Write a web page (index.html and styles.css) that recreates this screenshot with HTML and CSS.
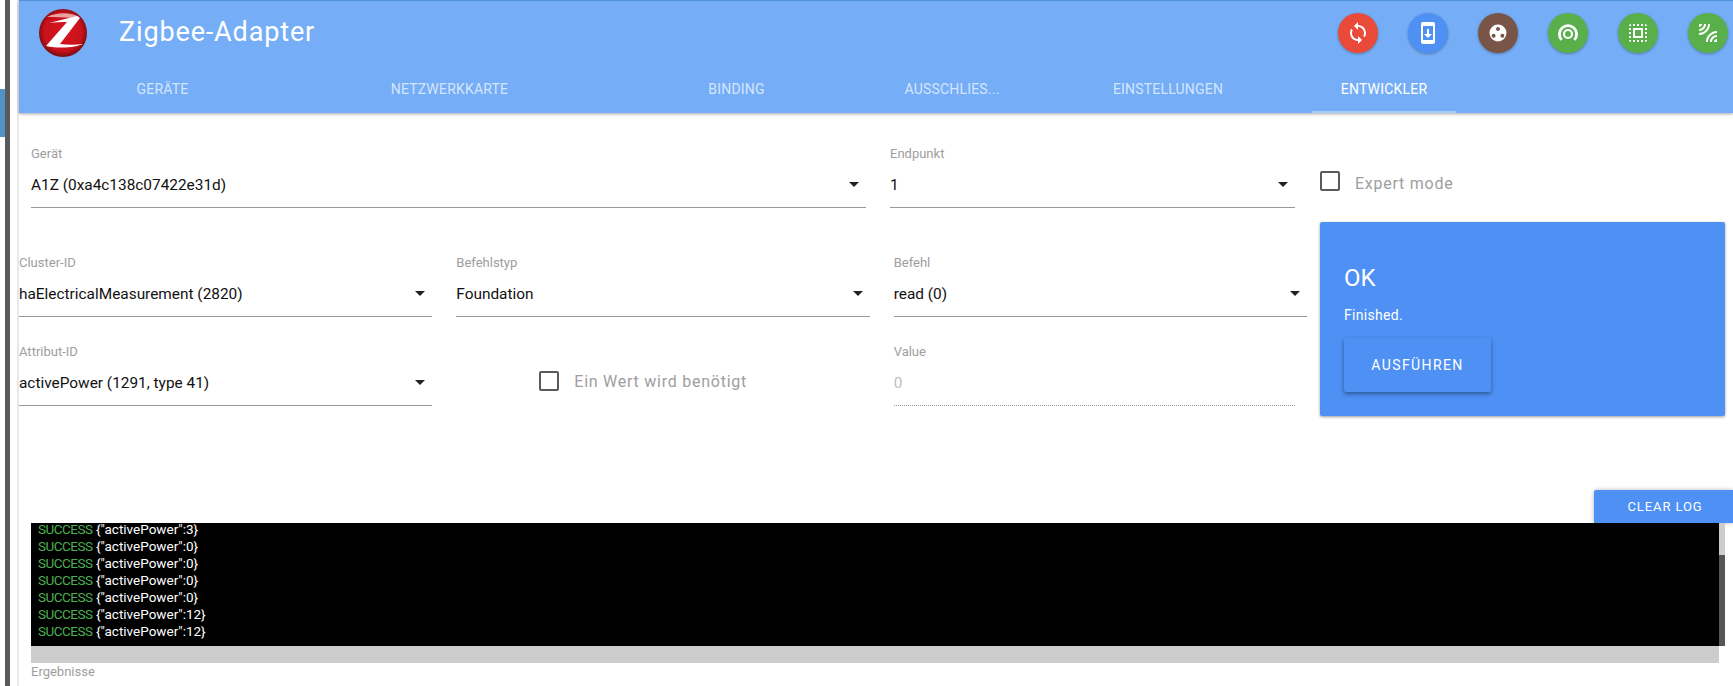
FILE: index.html
```html
<!DOCTYPE html>
<html lang="de">
<head>
<meta charset="utf-8">
<title>Zigbee-Adapter</title>
<link rel="stylesheet" href="styles.css">
</head>
<body>
<div class="page">
  <div class="rail">
    <div class="rail-edge"><div class="rail-stripe"></div></div>
    <div class="rail-bar"></div>
  </div>
  <main class="main">
    <header class="appbar">
      <div class="toolbar">
        <svg class="logo" viewBox="0 0 48 48" width="48" height="48" aria-hidden="true">
          <defs>
            <radialGradient id="sphere" cx="50%" cy="48%" r="55%">
              <stop offset="0" stop-color="#d8141f"/>
              <stop offset="0.72" stop-color="#c8121c"/>
              <stop offset="0.93" stop-color="#7d0d10"/>
              <stop offset="1" stop-color="#3b0a08"/>
            </radialGradient>
          </defs>
          <circle cx="24" cy="24" r="24" fill="url(#sphere)"/>
          <path d="M8 8 C18 3 32 3 40 8 L33 9 C24 8 16 8 8 8Z" fill="#e9a0a0"/>
          <path d="M10 14 L38 7 L41 9 L21 35 C29 36 37 36 44 35 C38 38 22 40 7 37 L28 13 C22 13 16 13 10 14Z" fill="#fff"/>
        </svg>
        <h1 class="title">Zigbee-Adapter</h1>
        <div class="actions">
          <span class="fab fab-red"><svg viewBox="0 0 24 24" width="24" height="24"><path d="M12 4V1L8 5l4 4V6c3.31 0 6 2.69 6 6 0 1.01-.25 1.97-.7 2.8l1.46 1.46C19.54 15.03 20 13.57 20 12c0-4.42-3.58-8-8-8zm0 14c-3.31 0-6-2.69-6-6 0-1.01.25-1.97.7-2.8L5.24 7.74C4.46 8.97 4 10.43 4 12c0 4.42 3.58 8 8 8v3l4-4-4-4v3z"/></svg></span>
          <span class="fab fab-blue"><svg viewBox="0 0 24 24" width="24" height="24"><path d="M17 1.01L7 1c-1.1 0-2 .9-2 2v18c0 1.1.9 2 2 2h10c1.1 0 2-.9 2-2V3c0-1.1-.9-1.99-2-1.99zM17 19H7V5h10v14zm-1-6h-3V8h-2v5H8l4 4 4-4z"/></svg></span>
          <span class="fab fab-brown"><svg viewBox="0 0 24 24" width="24" height="24"><path fill-rule="evenodd" d="M12 3.5a8.5 8.5 0 1 0 0 17 8.5 8.5 0 0 0 0-17zM12 6a2 2 0 1 1 0 4 2 2 0 0 1 0-4zM7.6 12.8a2 2 0 1 1 0 4 2 2 0 0 1 0-4zm8.8 0a2 2 0 1 1 0 4 2 2 0 0 1 0-4z"/></svg></span>
          <span class="fab fab-green"><svg viewBox="0 0 24 24" width="24" height="24"><path class="arc arc-outer" d="M5.6 18.9A8.6 8.6 0 1 1 18.4 18.9"/><circle class="arc arc-inner" cx="12" cy="13" r="4"/></svg></span>
          <span class="fab fab-green"><svg viewBox="0 0 24 24" width="24" height="24"><path d="M3 5h2V3c-1.1 0-2 .9-2 2zm0 8h2v-2H3v2zm4 8h2v-2H7v2zM3 9h2V7H3v2zm10-6h-2v2h2V3zm6 0v2h2c0-1.1-.9-2-2-2zM5 21v-2H3c0 1.1.9 2 2 2zm-2-4h2v-2H3v2zM9 3H7v2h2V3zm2 18h2v-2h-2v2zm8-8h2v-2h-2v2zm0 8c1.1 0 2-.9 2-2h-2v2zm0-12h2V7h-2v2zm0 8h2v-2h-2v2zm-4 4h2v-2h-2v2zm0-16h2V3h-2v2zM7 17h10V7H7v10zm2-8h6v6H9V9z"/></svg></span>
          <span class="fab fab-green"><svg viewBox="0 0 24 24" width="24" height="24"><path d="M6 3H3v3c1.66 0 3-1.34 3-3zm8 0h-2c0 4.97-4.03 9-9 9v2c6.08 0 11-4.93 11-11zm-4 0H8c0 2.76-2.24 5-5 5v2c3.87 0 7-3.13 7-7zm0 18h2c0-4.97 4.03-9 9-9v-2c-6.07 0-11 4.93-11 11zm8 0h3v-3c-1.66 0-3 1.34-3 3zm-4 0h2c0-2.76 2.24-5 5-5v-2c-3.87 0-7 3.13-7 7z"/></svg></span>
        </div>
      </div>
      <nav class="tabs">
        <a class="tab tab-wide">GERÄTE</a>
        <a class="tab tab-wide">NETZWERKKARTE</a>
        <a class="tab tab-wide">BINDING</a>
        <a class="tab tab-small">AUSSCHLIES...</a>
        <a class="tab tab-settings">EINSTELLUNGEN</a>
        <a class="tab tab-small tab-active">ENTWICKLER</a>
      </nav>
    </header>

    <section class="form">
      <div class="form-fields">
        <div class="row-top">
          <div class="field field-device">
            <label class="field-label">Gerät</label>
            <div class="select"><span>A1Z (0xa4c138c07422e31d)</span><i class="caret"></i></div>
          </div>
          <div class="field field-endpoint">
            <label class="field-label">Endpunkt</label>
            <div class="select"><span>1</span><i class="caret"></i></div>
          </div>
        </div>
        <div class="row-grid">
          <div class="field">
            <label class="field-label">Cluster-ID</label>
            <div class="select"><span>haElectricalMeasurement (2820)</span><i class="caret"></i></div>
          </div>
          <div class="field">
            <label class="field-label">Befehlstyp</label>
            <div class="select"><span>Foundation</span><i class="caret"></i></div>
          </div>
          <div class="field">
            <label class="field-label">Befehl</label>
            <div class="select"><span>read (0)</span><i class="caret"></i></div>
          </div>
          <div class="field">
            <label class="field-label">Attribut-ID</label>
            <div class="select"><span>activePower (1291, type 41)</span><i class="caret"></i></div>
          </div>
          <div class="check check-value"><span class="box"></span><span class="check-text">Ein Wert wird benötigt</span></div>
          <div class="field field-value">
            <label class="field-label">Value</label>
            <div class="select select-disabled"><span>0</span></div>
          </div>
        </div>
      </div>
      <div class="form-side">
        <div class="check check-expert"><span class="box"></span><span class="check-text">Expert mode</span></div>
        <div class="status">
          <h2 class="status-title">OK</h2>
          <p class="status-text">Finished.</p>
          <button class="run" type="button">AUSFÜHREN</button>
        </div>
      </div>
    </section>

    <section class="results">
      <div class="clear-row"><button class="clear" type="button">CLEAR LOG</button></div>
      <div class="log">
        <div class="log-view">
          <div class="log-lines">
            <div class="log-line"><b class="ok">SUCCESS</b> {"activePower":3}</div>
            <div class="log-line"><b class="ok">SUCCESS</b> {"activePower":0}</div>
            <div class="log-line"><b class="ok">SUCCESS</b> {"activePower":0}</div>
            <div class="log-line"><b class="ok">SUCCESS</b> {"activePower":0}</div>
            <div class="log-line"><b class="ok">SUCCESS</b> {"activePower":0}</div>
            <div class="log-line"><b class="ok">SUCCESS</b> {"activePower":12}</div>
            <div class="log-line"><b class="ok">SUCCESS</b> {"activePower":12}</div>
          </div>
        </div>
        <div class="log-scroll"><div class="log-thumb"></div></div>
      </div>
      <div class="log-hbar"></div>
      <div class="results-label">Ergebnisse</div>
    </section>
  </main>
</div>
</body>
</html>
```
FILE: styles.css
```css
* { box-sizing: border-box; }
html, body { margin: 0; padding: 0; height: 100%; overflow: hidden; background: #fff; }
body { font-family: Roboto, "Open Sans", sans-serif; color: #000; }

.page { display: flex; width: 1733px; height: 686px; }

.rail { display: flex; width: 19px; flex: none; border-right: 2px solid #e9e9e9; }
.rail-edge { width: 5px; padding-top: 89px; }
.rail-stripe { height: 48px; background: #4f93c9; }
.rail-bar { width: 5px; background: #5a5a5a; }

.main { flex: 1; min-width: 0; display: flex; flex-direction: column; }

.appbar {
  height: 113px; flex: none; background: #75aef7; border-top: 1px solid #4e94cf;
  box-shadow: 0 1px 3px rgba(0,0,0,.35); display: flex; flex-direction: column;
}
.toolbar { height: 73px; flex: none; display: flex; align-items: flex-start; padding-left: 20px; }
.logo { margin-top: 8px; flex: none; }
.title { margin: 15px 0 0 32px; font-size: 27px; line-height: 32px; font-weight: 400; color: #fff; letter-spacing: .85px; }
.actions { margin-left: auto; margin-top: 12px; display: flex; gap: 30px; padding-right: 5px; }
.fab {
  width: 40px; height: 40px; border-radius: 50%; display: flex; align-items: center; justify-content: center;
  box-shadow: 0 1px 3px rgba(0,0,0,.3);
}
.fab svg { fill: #fff; }
.fab svg .arc { fill: none; stroke: #fff; }
.fab svg .arc-outer { stroke-width: 2.8; }
.fab svg .arc-inner { stroke-width: 2.2; }
.fab-red { background: #ea4a39; }
.fab-blue { background: #4e90f4; }
.fab-brown { background: #795548; }
.fab-green { background: #59b04b; }

.tabs { flex: 1; display: flex; }
.tab {
  display: flex; align-items: center; justify-content: center; height: 39px; padding-bottom: 7px;
  font-size: 14px; color: rgba(255,255,255,.7); letter-spacing: .2px; border-bottom: 2px solid transparent;
}
.tab-wide { width: 287px; }
.tab-small { width: 144px; }
.tab-settings { width: 288px; }
.tab-active { color: #fff; border-bottom-color: #a9cdfb; }

.form { display: flex; padding: 31px 0 0; height: 303px; flex: none; }
.form-fields { width: 1288px; flex: none; }
.form-side { width: 405px; margin-left: 13px; flex: none; padding-top: 25px; }

.row-top { display: flex; padding-left: 12px; gap: 24px; }
.field-device { width: 835px; }
.field-endpoint { width: 405px; }
.row-grid { display: grid; grid-template-columns: repeat(3, 1fr); column-gap: 24px; row-gap: 25px; margin-top: 45px; }

.field-label { display: block; padding-top: 2px; font-size: 13px; line-height: 16px; color: #9e9e9e; }
.select {
  position: relative; height: 46px; padding-top: 11px; font-size: 15.4px; line-height: 24px; color: #111;
  border-bottom: 1px solid #999;
}
.caret {
  position: absolute; right: 7px; top: 20px; width: 0; height: 0;
  border-left: 5px solid transparent; border-right: 5px solid transparent; border-top: 5px solid #222;
}
.field-value { padding-right: 12px; }
.select-disabled { color: #bdbdbd; border-bottom: 1px dotted #999; }

.check { display: flex; align-items: center; gap: 15px; }
.box { width: 20px; height: 20px; flex: none; border: 2px solid #5a5a5a; border-radius: 2px; }
.check-text { margin-top: 5px; font-size: 16px; color: #9e9e9e; letter-spacing: .75px; }
.check-value { padding: 14px 0 0 83px; }
.check-value .check-text { margin-top: 1px; }

.status {
  margin-top: 29px; height: 194px; padding: 39px 24px 0; background: #4e90f4; border-radius: 2px;
  box-shadow: 0 1px 3px rgba(0,0,0,.4); color: #fff;
}
.status-title { margin: 0; font-size: 24px; line-height: 34px; font-weight: 400; }
.status-text { margin: 11px 0 14px; font-size: 14px; line-height: 18px; letter-spacing: .3px; }
.run {
  display: block; width: 147px; height: 54px; border: 0; border-radius: 2px; background: #4e90f4; color: #fff;
  font: 400 14px Roboto, sans-serif; letter-spacing: 1.4px; box-shadow: 0 2px 4px rgba(0,0,0,.4);
}

.results { padding: 74px 0 0 12px; flex: 1; }
.clear-row { display: flex; justify-content: flex-end; }
.clear {
  width: 139px; height: 33px; padding: 0 0 0 3px; border: 0; border-radius: 2px 0 0 0; background: #4e90f4; color: #fff;
  font: 400 13px Roboto, sans-serif; letter-spacing: .9px; box-shadow: 0 0 4px rgba(0,0,0,.3);
}
.log { display: flex; width: 1694px; height: 123px; }
.log-view { flex: 1; background: #000; overflow: hidden; padding-left: 7px; }
.log-lines { margin-top: -2px; }
.log-line { height: 17px; font-size: 13.5px; line-height: 17px; color: #fff; white-space: nowrap; }
.ok { font-weight: 400; color: #4caf50; letter-spacing: -.5px; }
.log-scroll { width: 6px; background: #ccc; padding-top: 32px; flex: none; }
.log-thumb { height: 100%; background: #555; }
.log-hbar { width: 1688px; height: 17px; background: #ccc; }
.results-label { font-size: 13px; line-height: 17px; color: #9e9e9e; }
```
